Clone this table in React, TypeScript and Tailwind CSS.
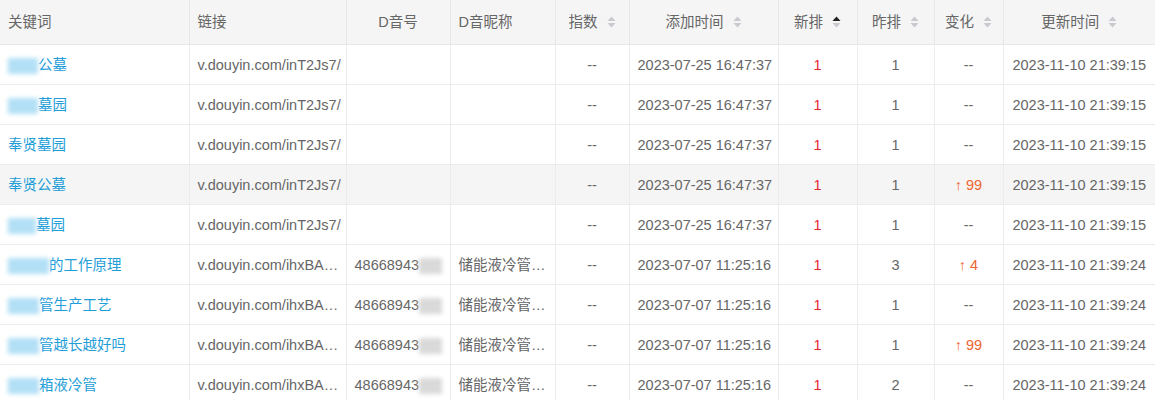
import React from 'react';

type Row = {
  blur: number;
  kw: string;
  link: string;
  did?: boolean;
  nick?: string;
  add: string;
  rank: string;
  prev: string;
  change?: string;
  upd: string;
  hover?: boolean;
};

const rows: Row[] = [
  { blur: 30, kw: '公墓', link: 'v.douyin.com/inT2Js7/', add: '2023-07-25 16:47:37', rank: '1', prev: '1', upd: '2023-11-10 21:39:15' },
  { blur: 30, kw: '墓园', link: 'v.douyin.com/inT2Js7/', add: '2023-07-25 16:47:37', rank: '1', prev: '1', upd: '2023-11-10 21:39:15' },
  { blur: 0, kw: '奉贤墓园', link: 'v.douyin.com/inT2Js7/', add: '2023-07-25 16:47:37', rank: '1', prev: '1', upd: '2023-11-10 21:39:15' },
  { blur: 0, kw: '奉贤公墓', link: 'v.douyin.com/inT2Js7/', add: '2023-07-25 16:47:37', rank: '1', prev: '1', change: '99', upd: '2023-11-10 21:39:15', hover: true },
  { blur: 28, kw: '墓园', link: 'v.douyin.com/inT2Js7/', add: '2023-07-25 16:47:37', rank: '1', prev: '1', upd: '2023-11-10 21:39:15' },
  { blur: 41, kw: '的工作原理', link: 'v.douyin.com/ihxBA…', did: true, nick: '储能液冷管…', add: '2023-07-07 11:25:16', rank: '1', prev: '3', change: '4', upd: '2023-11-10 21:39:24' },
  { blur: 31, kw: '管生产工艺', link: 'v.douyin.com/ihxBA…', did: true, nick: '储能液冷管…', add: '2023-07-07 11:25:16', rank: '1', prev: '1', upd: '2023-11-10 21:39:24' },
  { blur: 31, kw: '管越长越好吗', link: 'v.douyin.com/ihxBA…', did: true, nick: '储能液冷管…', add: '2023-07-07 11:25:16', rank: '1', prev: '1', change: '99', upd: '2023-11-10 21:39:24' },
  { blur: 31, kw: '箱液冷管', link: 'v.douyin.com/ihxBA…', did: true, nick: '储能液冷管…', add: '2023-07-07 11:25:16', rank: '1', prev: '2', upd: '2023-11-10 21:39:24' },
];

function SortIcon({ active }: { active?: boolean }) {
  return (
    <svg width="9" height="12" viewBox="0 0 9 12" className="ml-[9px] inline-block align-[-1px]">
      <path d="M4.5 0.5 L8.5 5 L0.5 5 Z" fill={active ? '#222' : '#c8cad0'} />
      <path d="M0.5 7 L8.5 7 L4.5 11.5 Z" fill="#c8cad0" />
    </svg>
  );
}

const th = 'h-[44px] border-r border-b border-[#e8e8e8] font-normal text-[#666] px-[8px] pt-[3px] pb-0 whitespace-nowrap';
const td = 'h-[40px] border-r border-b border-[#ececec] px-[8px] pt-[3px] pb-0 whitespace-nowrap overflow-hidden';

export default function App() {
  return (
    <div
      className="w-[1155px] h-[400px] overflow-hidden bg-white text-[14.5px] text-[#666]"
      style={{ fontFamily: '"Liberation Sans", Arial, "Noto Sans CJK SC", sans-serif' }}
    >
      <table className="table-fixed border-collapse w-[1155px]">
        <colgroup>
          <col className="w-[189px]" />
          <col className="w-[157px]" />
          <col className="w-[104px]" />
          <col className="w-[105px]" />
          <col className="w-[74px]" />
          <col className="w-[149px]" />
          <col className="w-[79px]" />
          <col className="w-[77px]" />
          <col className="w-[69px]" />
          <col className="w-[152px]" />
        </colgroup>
        <thead>
          <tr className="bg-[#f5f5f5]">
            <th className={`${th} text-left`}>关键词</th>
            <th className={`${th} text-left`}>链接</th>
            <th className={`${th} text-center`}>D音号</th>
            <th className={`${th} text-left`}>D音昵称</th>
            <th className={`${th} text-center`}>指数<SortIcon /></th>
            <th className={`${th} text-center`}>添加时间<SortIcon /></th>
            <th className={`${th} text-center`}>新排<SortIcon active /></th>
            <th className={`${th} text-center`}>昨排<SortIcon /></th>
            <th className={`${th} text-center`}>变化<SortIcon /></th>
            <th className={`${th} text-center border-r-0`}>更新时间<SortIcon /></th>
          </tr>
        </thead>
        <tbody>
          {rows.map((r, i) => (
            <tr key={i} className={r.hover ? 'bg-[#f5f5f5]' : 'bg-white'}>
              <td className={`${td} text-[#1f9ed8]`}>
                <div className="flex items-center">
                  {r.blur > 0 && (
                    <span
                      className="inline-block h-[16px] bg-[#b3e0f6] blur-[2px]"
                      style={{ width: r.blur }}
                    />
                  )}
                  <span>{r.kw}</span>
                </div>
              </td>
              <td className={td}>{r.link}</td>
              <td className={td}>
                {r.did && (
                  <div className="flex items-center">
                    <span>48668943</span>
                    <span className="inline-block w-[30px] h-[16px] bg-[#d9d9d9] blur-[2px]" />
                  </div>
                )}
              </td>
              <td className={td}>{r.nick}</td>
              <td className={`${td} text-center`}>--</td>
              <td className={`${td} text-center`}>{r.add}</td>
              <td className={`${td} text-center text-[#e4262e]`}>{r.rank}</td>
              <td className={`${td} text-center`}>{r.prev}</td>
              <td className={`${td} text-center ${r.change ? 'text-[#f0642d]' : ''}`}>
                {r.change ? `↑ ${r.change}` : '--'}
              </td>
              <td className={`${td} text-center border-r-0`}>{r.upd}</td>
            </tr>
          ))}
        </tbody>
      </table>
    </div>
  );
}
